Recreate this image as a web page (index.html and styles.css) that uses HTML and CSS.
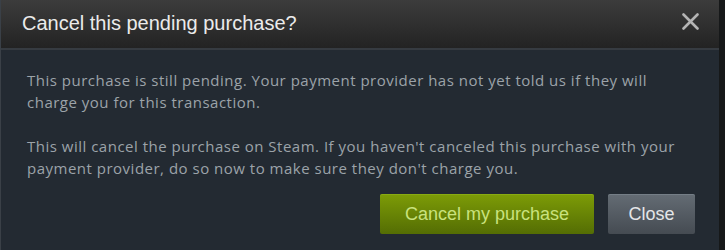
FILE: index.html
```html
<!DOCTYPE html>
<html>
<head>
<meta charset="utf-8">
<link rel="stylesheet" href="styles.css">
</head>
<body>
<div class="modal">
  <div class="modal-header">
    <div class="modal-title">Cancel this pending purchase?</div>
    <div class="modal-close">
      <svg width="17" height="17" viewBox="0 0 17 17"><path d="M1.5 1.5 L15.5 15.5 M15.5 1.5 L1.5 15.5" stroke="#b4b4b4" stroke-width="2.6" stroke-linecap="round"/></svg>
    </div>
  </div>
  <div class="modal-body">
    <p class="modal-text">This purchase is still pending. Your payment provider has not yet told us if they will charge you for this transaction.</p>
    <p class="modal-text">This will cancel the purchase on Steam. If you haven't canceled this purchase with your payment provider, do so now to make sure they don't charge you.</p>
    <div class="modal-actions">
      <div class="btn btn-green">Cancel my purchase</div>
      <div class="btn btn-grey">Close</div>
    </div>
  </div>
</div>
</body>
</html>
```

FILE: styles.css
```css
html, body {
  margin: 0;
  padding: 0;
  background: #161819;
  height: 250px;
  overflow: hidden;
}
body {
  font-family: "Liberation Sans", Arial, sans-serif;
}
.modal {
  width: 718px;
  height: 250px;
  background: #232a32;
  border-left: 1px solid #3a4047;
  display: flex;
  flex-direction: column;
}
.modal-header {
  height: 48px;
  flex: none;
  display: flex;
  align-items: center;
  justify-content: space-between;
  padding: 0 20px 0 21px;
  background: linear-gradient(to bottom, #3c3c3c 0%, #232323 100%);
  border-bottom: 2px solid #363b41;
}
.modal-title {
  color: #ebebeb;
  font-size: 20px;
  margin-top: -2px;
}
.modal-close {
  display: flex;
  margin-top: -5px;
}
.modal-body {
  padding: 19px 24px 0 26px;
}
.modal-text {
  margin: 0 0 22px 0;
  width: 656px;
  color: #9ca3a9;
  font-family: "Open Sans", "Noto Sans", sans-serif;
  font-size: 15px;
  letter-spacing: 0.5px;
  line-height: 22px;
}
.modal-text:last-of-type {
  margin-bottom: 0;
}
.modal-actions {
  display: flex;
  justify-content: flex-end;
  gap: 14px;
  margin-top: 15px;
}
.btn {
  height: 40px;
  box-sizing: border-box;
  display: flex;
  align-items: center;
  justify-content: center;
  border-radius: 2px;
  font-size: 18px;
}
.btn-green {
  width: 214px;
  color: #c9e27e;
  background: linear-gradient(to bottom, #7d9c07 0%, #546d04 100%);
  box-shadow: inset 0 1px 0 rgba(160, 200, 40, 0.35);
}
.btn-grey {
  width: 87px;
  color: #e4e6e8;
  background: linear-gradient(to bottom, #646c74 0%, #454b52 100%);
  box-shadow: inset 0 1px 0 rgba(150, 160, 170, 0.35);
}
```
